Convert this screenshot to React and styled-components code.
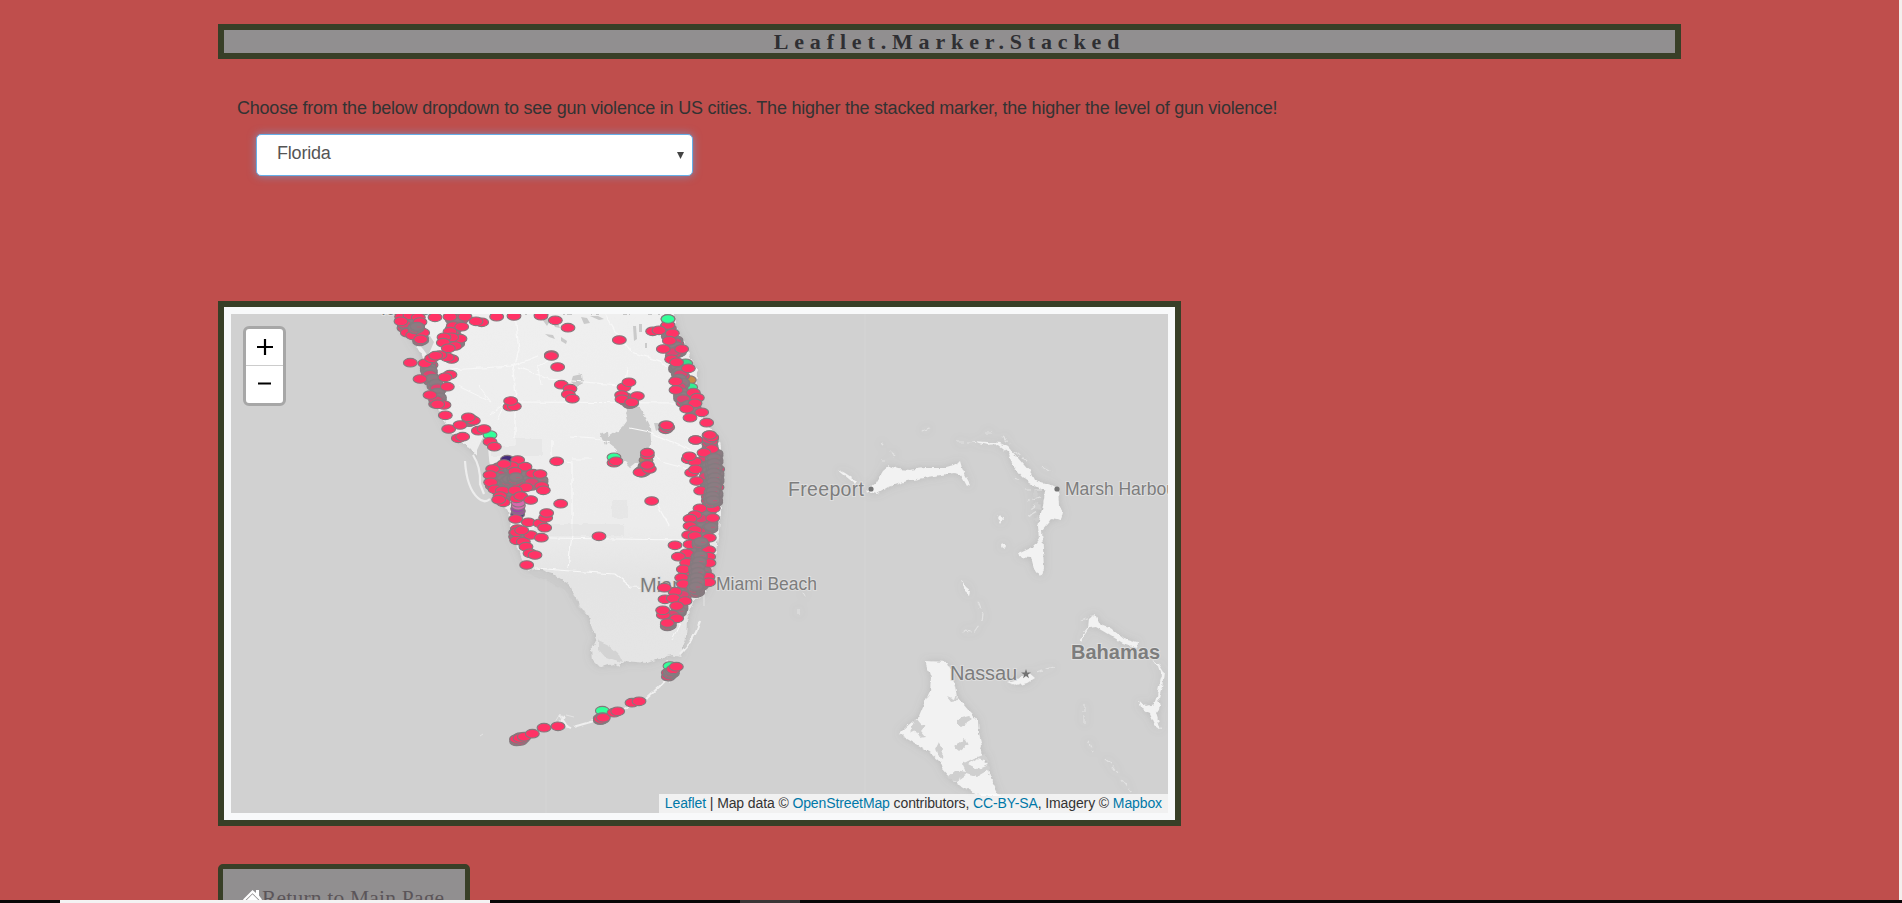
import React from "react";
import styled, { createGlobalStyle } from "styled-components";

const GlobalStyle = createGlobalStyle`
  * { box-sizing: border-box; }
  html, body { margin: 0; padding: 0; }
  body {
    background: #bf4e4c;
    overflow: hidden;
    font-family: "Liberation Sans", Arial, sans-serif;
  }
`;

const Page = styled.div`
  position: relative;
  height: 903px;
  overflow: hidden;
  background: #bf4e4c;
  padding: 24px 0 0 218px;
`;

const Container = styled.main`
  width: 1463px;
  display: flex;
  flex-direction: column;
  align-items: flex-start;
`;

const Title = styled.h1`
  width: 100%;
  height: 35px;
  margin: 0;
  border: 6px solid #383f27;
  background: #918f90;
  color: #2f2f33;
  font: bold 22px/23px "Liberation Serif", Georgia, serif;
  letter-spacing: 5.85px;
  text-align: center;
`;

const Prompt = styled.p`
  margin: 35px 0 0 19px;
  height: 28px;
  font-size: 18px;
  line-height: 28px;
  letter-spacing: -0.225px;
  color: #333;
  white-space: nowrap;
`;

const SelectBox = styled.div`
  display: flex;
  align-items: center;
  justify-content: space-between;
  width: 437px;
  height: 42px;
  margin: 12px 0 0 38px;
  padding: 0 8px 3px 20px;
  border: 1px solid #66afe9;
  border-radius: 5px;
  background: #fff;
  box-shadow: 0 0 9px rgba(102, 175, 233, 0.65);
  color: #555;
  font-size: 18px;
  letter-spacing: -0.2px;
`;

const Arrow = styled.svg`
  width: 7px;
  height: 7px;
  margin-top: 3px;
`;

const MapFrame = styled.section`
  position: relative;
  width: 963px;
  height: 525px;
  margin-top: 125px;
  padding: 7px;
  border: 6px solid #383f27;
  background: #f8f9fa;
`;

const MapCanvas = styled.svg`
  display: block;
  width: 937px;
  height: 499px;
`;

const ZoomControl = styled.div`
  position: absolute;
  left: 19px;
  top: 19px;
  width: 43px;
  height: 80px;
  border: 3px solid #a7a7a7;
  border-radius: 6px;
  background: #fff;
  overflow: hidden;
`;

const ZoomButton = styled.div`
  display: flex;
  align-items: center;
  justify-content: center;
  height: 37px;
  padding-bottom: ${(p) => (p.$divided ? "0" : "2px")};
  border-bottom: ${(p) => (p.$divided ? "1px solid #ccc" : "none")};
`;

const Attribution = styled.div`
  position: absolute;
  right: 7px;
  bottom: 7px;
  height: 19px;
  padding: 0 6px;
  background: rgba(255, 255, 255, 0.7);
  color: #333;
  font-size: 14px;
  line-height: 18px;
  letter-spacing: -0.11px;
  white-space: nowrap;
`;

const Credit = styled.span`
  color: #0078a8;
`;

const ReturnButton = styled.div`
  display: flex;
  align-items: flex-start;
  width: 252px;
  height: 70px;
  margin-top: 38px;
  padding: 17px 0 0 20px;
  border: 5px solid #383f27;
  border-radius: 5px;
  background: #918f90;
  color: #5b5559;
  font: 21.5px/25px "Liberation Serif", Georgia, serif;
  letter-spacing: 0.2px;
  white-space: nowrap;
`;

const HomeIcon = styled.svg`
  width: 19px;
  height: 17px;
  margin-top: 4px;
  flex: none;
`;

const Taskbar = styled.div`
  position: absolute;
  left: 0;
  bottom: 0;
  width: 1902px;
  height: 3px;
  display: flex;
`;

const TaskSegment = styled.div`
  width: ${(p) => p.$w}px;
  background: ${(p) => p.$color};
`;

const ScrollEdge = styled.div`
  position: absolute;
  right: 0;
  top: 0;
  width: 3px;
  height: 900px;
  background: #f4efed;
`;

/* Marker positions are in thirds of a pixel, measured from each area's origin. */
const areas = [
  {
    origin: [370, 300],
    dense: [[100, 56], [120, 55], [130, 65], [105, 78], [140, 82], [135, 90], [145, 105], [152, 120], [250, 55], [270, 60], [255, 70], [250, 88], [250, 105], [260, 130], [230, 120], [180, 195], [175, 207], [178, 217], [182, 230], [185, 240], [195, 255], [205, 270], [200, 282], [205, 296], [200, 306], [300, 362]],
    pts: [[95, 50], [120, 46], [145, 52], [93, 64], [150, 66], [112, 98], [128, 106], [158, 98], [152, 118], [195, 52], [240, 50], [285, 50], [250, 78], [275, 80], [335, 67], [318, 64], [380, 50], [432, 48], [513, 47], [556, 61], [594, 83], [240, 95], [270, 116], [245, 112], [222, 112], [220, 128], [255, 138], [235, 145], [245, 177], [232, 172], [210, 165], [165, 190], [185, 175], [197, 167], [121, 188], [150, 237], [240, 224], [225, 232], [232, 260], [180, 285], [222, 315], [203, 313], [226, 346], [236, 387], [270, 375], [310, 362], [295, 352], [265, 415], [278, 410], [325, 392], [342, 387], [360, 425], [373, 440], [544, 165], [563, 201], [574, 254], [600, 266], [595, 283], [607, 296], [420, 320], [433, 319], [422, 303], [544, 168]],
    special: [[360, 405, "#33ff99"]],
  },
  {
    origin: [560, 300],
    special: [[324, 57, "#33ff99"], [377, 190, "#35dd8b"], [388, 240, "#c98a45"], [392, 262, "#33ef93"], [162, 472, "#33ff99"], [258, 481, "#a88060"]],
    dense: [[325, 85], [328, 105], [345, 125], [348, 132], [345, 143], [355, 155], [340, 162], [350, 205], [358, 218], [365, 228], [355, 240], [365, 252], [360, 266], [365, 282], [365, 292], [372, 303], [385, 318], [400, 330], [200, 298], [212, 308], [450, 422], [450, 438], [248, 514], [258, 500], [320, 382]],
    pts: [[324, 75], [278, 94], [297, 91], [337, 100], [328, 122], [310, 147], [365, 147], [335, 178], [350, 187], [385, 205], [347, 244], [348, 270], [400, 278], [412, 293], [405, 310], [380, 326], [425, 337], [390, 353], [440, 368], [455, 414], [447, 406], [407, 420], [450, 446], [178, 120], [192, 262], [207, 247], [185, 285], [186, 298], [232, 288], [215, 307], [320, 376], [162, 488], [168, 484], [262, 466], [262, 458], [240, 517], [268, 507], [262, 495]],
  },
  {
    origin: [400, 400],
    special: [[322, 179, "#442a7b"], [353, 343, "#514088"], [355, 333, "#a846a8"], [353, 326, "#9f46a6"], [355, 317, "#db68af"], [355, 308, "#d768ad"]],
    dense: [[300, 207], [335, 210], [370, 211], [300, 230], [340, 226], [375, 230], [405, 233], [280, 235], [310, 239], [345, 238], [385, 243], [420, 244], [280, 252], [315, 252], [352, 250], [398, 252], [300, 270], [330, 267], [360, 262], [310, 285], [330, 281], [350, 404], [355, 413]],
    pts: [[353, 180], [335, 198], [312, 192], [375, 200], [278, 207], [398, 221], [420, 222], [270, 225], [345, 215], [272, 247], [425, 258], [430, 271], [285, 268], [307, 272], [378, 262], [345, 271], [300, 288], [310, 307], [296, 299], [350, 295], [362, 288], [392, 300], [385, 367], [347, 357], [420, 370], [434, 383], [437, 353], [440, 339], [482, 311], [470, 184], [352, 387], [350, 421], [370, 425], [392, 405], [350, 397], [365, 391], [424, 413], [378, 440], [390, 460], [405, 465], [380, 495], [597, 409]],
  },
  {
    origin: [580, 400],
    pts: [[395, 112], [389, 105], [347, 120], [395, 147], [372, 158], [325, 178], [345, 185], [328, 169], [335, 218], [347, 208], [350, 243], [362, 272], [360, 325], [345, 345], [330, 356], [330, 378], [345, 390], [326, 405], [345, 408], [330, 433], [285, 436], [320, 460], [295, 470], [320, 488], [310, 508], [305, 533], [310, 552], [285, 575], [253, 563], [255, 598], [280, 595], [315, 603], [290, 618], [250, 645], [248, 631], [290, 655], [262, 669], [215, 303], [386, 450], [386, 470], [387, 489], [384, 530], [386, 547], [388, 413], [398, 354], [400, 325]],
    dense: [[390, 125], [385, 160], [405, 165], [380, 180], [405, 185], [385, 200], [410, 208], [385, 215], [408, 225], [382, 235], [408, 243], [385, 252], [408, 262], [388, 273], [405, 285], [388, 296], [404, 305], [390, 318], [385, 335], [378, 350], [390, 370], [365, 362], [365, 385], [390, 385], [360, 400], [372, 415], [350, 422], [365, 435], [345, 450], [372, 455], [335, 475], [365, 480], [330, 495], [365, 500], [340, 510], [370, 515], [330, 525], [362, 530], [340, 540], [373, 545], [325, 555], [360, 557], [335, 570], [350, 575], [295, 580], [310, 590], [300, 625], [295, 637], [280, 650], [265, 675]],
    late: [[400, 178], [400, 193], [402, 208], [398, 222], [402, 236], [398, 250], [400, 264], [396, 278], [394, 292], [396, 305], [360, 430], [358, 470], [355, 488], [350, 505], [352, 520], [348, 536], [350, 550], [345, 564]],
    special: [],
  },
  {
    origin: [480, 560],
    special: [[570, 318, "#33ff99"], [367, 452, "#33ff99"]],
    dense: [[568, 344], [574, 338], [113, 540], [124, 537], [364, 476]],
    pts: [[580, 328], [589, 320], [456, 428], [477, 424], [362, 477], [370, 473], [402, 458], [413, 454], [234, 499], [192, 503], [110, 537], [120, 534], [133, 530], [157, 521]],
  },
];

function Marker({ origin, point, fill }) {
  return (
    <ellipse
      cx={origin[0] + point[0] / 3}
      cy={origin[1] + point[1] / 3}
      rx="6.9"
      ry="4.3"
      fill={fill}
      stroke="#85787c"
      strokeWidth="1.1"
    />
  );
}

/* Several markers piled almost on one spot: mostly outlines, with slivers of fill. */
function MarkerPile({ origin, point, loose }) {
  const cx = origin[0] + point[0] / 3;
  const cy = origin[1] + point[1] / 3;
  const steps = loose ? [2, 0, -2] : [1.5, 0.5, -0.5, -1.5];
  return (
    <g fill={loose ? "#e04470" : "#8b7c82"} stroke="#847b7f" strokeWidth="1.2">
      {steps.map((d, i) => (
        <ellipse key={d} cx={cx + (i % 2 ? 1 : -1)} cy={cy + d} rx="6.9" ry="4.2" />
      ))}
      {!loose && <path d={`M${cx - 6} ${cy + 2.5}q3 2.5 7 1.8M${cx + 1} ${cy - 1}h4`} fill="none" stroke="#c95576" strokeWidth=".8" />}
    </g>
  );
}

function FloridaLand() {
  return (
    <g>
      <path
        filter="url(#shore)"
        fill="url(#land)"
        d="M397 314L413 340 424 358 421 370 431 392 439 411 446 425 456 438 470 448 480 459 488 456 491 475 497 493 508 511 512 532 519 551 525 566 528 571 535 568 552 573 570 585 576 599 580 607 589 616 592 628 597 639 591 650 592 659 600 667 614 664 619 667 625 661 647 663 664 657 672 655 680 657 683 647 686 637 687 620 693 602 707 590 714 565 719 530 722 495 723 460 719 442 708 426 701 410 697 394 698 373 687 349 677 331 673 314Z"
      />
      <path fill="#cdcdcd" d="M412 337L430 336 434 342 428 356 423 349ZM484 435L488 447 490 470 484 481 477 463 477 450ZM675 385L684 395 688 412 681 404Z" />
      <path d="M465 461C466 477 469 490 478 498Q484 504 490 499M473 455Q481 467 480 484L484 494" fill="none" stroke="#ededed" strokeWidth="2.2" />
      <path filter="url(#rough)" fill="#c9c9c9" d="M625 412L628 406 640 408 646 417 651 428 652 440 648 450 642 455 640 466 635 463 630 467 623 460 616 449 608 443 609 437 622 428 627 421ZM600 433L608 432 609 440 605 445ZM573 376L582 374 583 383 578 388 571 382Z" />
      <g filter="url(#rough)" fill="none" stroke="#f8f8f8" strokeWidth="1.2">
        <path d="M515 315L519 350 513 372 516 393 511 409M450 370L512 366 538 356M518 367L549 379 630 386M511 402L680 403M515 403V438M552 440V460L572 463 572 535 568 568M605 314L616 333 631 352 660 361 675 374M535 538L549 538 684 540M535 568L570 571 615 574 631 587 666 588M630 428L650 432 700 455M655 500L669 525M570 436L594 438 610 442M592 459H572M628 367L625 390" />
        <path d="M541 385L538 366 552 359M458 386L491 402 479 386M490 415L505 403 497 420M645 449L665 463 700 472M672 640L681 621M666 660L670 682" strokeWidth=".9" />
      </g>
      <g fill="#cacaca">
        <path d="M542 319l5-2 3 4-3 5zM552 321l6 2 2 5-5-1zM545 334l8 1 2 4-6-2zM561 337l6 4-1 3-5-3zM581 317l6 1 3 5-6 1zM590 316l8 0 6 3-5 1zM633 326l3 0 1 13-3 2zM639 324h3v8h-3zM645 343h2v5h-2zM654 423h4l2 5-4 3z" />
        <path filter="url(#rough)" d="M534 571l18 4 15 9 18 29-4 1-16-24-19-10-18-6zM598 640l11 5 9 8 5 10-8-2-9-3-8-9z" opacity=".65" />
      </g>
      <path fill="#e2e2e2" opacity=".5" filter="url(#rough)" d="M490 446h26v-8h26v18h-52zM534 524h90v12h-90zM612 500h16v18h-16z" />
      <path d="M700 621Q694 640 680 654M668 678L659 687 646 699M631 705L618 713M594 721L573 727M559 714L568 728 570 729M560 724L564 716" fill="none" stroke="#efefef" strokeWidth="2.2" filter="url(#rough)" />
      <path d="M555 722l5-8 2 5M566 715l8 2M480 736l3-2M704 593v13" fill="none" stroke="#e4e4e4" />
    </g>
  );
}

function BahamasLand() {
  return (
    <g fill="#f2f2f2" filter="url(#shore)">
      <path d="M866 491L876 483 883 471 889 466 898 469 910 470 925 468 943 468 957 464 960 461 962 468 965 475 970 484 967 486 961 475 955 473 934 476 907 481 889 487 877 494Z" />
      <path d="M837 469L845 473 857 481 855 484Z" />
      <path d="M971 441L987 442 1000 443 1008 447 1017 457 1031 473 1035 481 1051 486 1058 490 1059 506 1063 512 1061 520 1052 518 1042 530 1043 549 1044 570 1040 576 1034 568 1031 557 1019 556 1018 554 1033 547 1039 538 1038 526 1043 506 1045 491 1032 484 1022 477 1013 466 1008 452 998 444 987 445Z" />
      <path d="M997 517l4-2 3 4-3 5zM1003 543l3 3-1 2-3-2zM961 579l5 8 5 4-1 4-5-4zM936 664l3-1-1 5z" />
      <path d="M925 661L947 662 951 670 955 686 957 697 969 711 978 721 979 734 982 746 980 752 986 763 991 779 1000 796H982L963 787 950 778 942 769 939 761 930 753 919 746 899 734 904 729 919 716 924 704 930 691 931 678Z" />
      <path d="M1007 682l10-3 11-7 7 6-8 5-10 3z" />
      <path d="M1078 641l10-13 1-9 6-5 4 9 10 4 15 12 14 4-1 5-14-5-15-9-12-7-7 1-9 14zM1151 661l8 3 5 8-2 15-3 11 2 8-5 7 5 17-6-5-5-11-10-7-2-6 9 5 7-2 3-8 2-10 3-11-3-9z" />
      <path d="M957 442h14M923 432l8-4M881 443l2 2M890 452l5 4M984 433h8M1002 436l8 8M1014 451l13 10M1042 467l10 5M881 461l4 0M1081 620l14-5M1036 672l18-5M1084 704v20M1088 740l5 12M1105 759l5 4 8 10M1122 780l9 12M978 602l5 12-1 7M979 625l-5 7-13-1M799 609v5M802 593l4 3M1020 480l-6-2M1042 490h-18M1040 497l-12 4M1038 504l-9 6M1036 512l-7 4" fill="none" stroke="#e2e2e2" strokeWidth="1.2" strokeDasharray="8 3" />
      <g fill="#cfcfcf">
        <path d="M1033 489l5 4-1 4-4-2zM1035 503l6 2-1 4-5-2zM1034 519l4-3 1 5zM947 697l7 3 2-6 1 7-6 1zM957 719l12-3 4 3-12 7-4-2zM954 747l11-8 3 5-9 7zM915 718l6 7 4 1-4 5 5 6-6 1-5-8-6 3zM936 748l3-6 4 5-1 11-4-3zM947 778l9-8 10 2-4-8 12-6 11-4 4 8-13-3-8 5 10 5 10-4 2 4-14 8-10-3-10 7z" />
      </g>
    </g>
  );
}

function ViolenceMap() {
  return (
    <MapCanvas viewBox="231 314 937 499">
      <defs>
        <linearGradient id="land" x1="0" y1="0" x2="0" y2="1">
          <stop offset="0" stopColor="#efefef" />
          <stop offset=".6" stopColor="#ececec" />
          <stop offset=".75" stopColor="#e4e4e4" />
          <stop offset="1" stopColor="#e5e5e5" />
        </linearGradient>
        <filter id="rough" x="-10%" y="-10%" width="120%" height="120%">
          <feTurbulence type="fractalNoise" baseFrequency=".12" numOctaves="2" seed="7" result="n" />
          <feDisplacementMap in="SourceGraphic" in2="n" scale="4" xChannelSelector="R" yChannelSelector="G" />
        </filter>
        <filter id="shore" x="-10%" y="-10%" width="120%" height="120%">
          <feTurbulence type="fractalNoise" baseFrequency=".18" numOctaves="2" seed="4" result="n" />
          <feDisplacementMap in="SourceGraphic" in2="n" scale="5" xChannelSelector="R" yChannelSelector="G" result="coast" />
          <feDropShadow in="coast" dx="0" dy="0" stdDeviation="4" floodColor="#777" floodOpacity=".25" />
        </filter>
      </defs>
      <rect x="231" y="314" width="937" height="499" fill="#d1d1d1" />
      <path d="M546 314V813M865 314V813" stroke="#d5d5d5" />
      <FloridaLand />
      <BahamasLand />
      <g fill="#7d7d7d" fontFamily="Liberation Sans, Arial, sans-serif" fontSize="17.5" stroke="#dedede" strokeWidth="2" paintOrder="stroke">
        <text x="788" y="495.5" textLength="76" fontSize="19.5">Freeport</text>
        <text x="1065" y="495" fontSize="17.5">Marsh Harbour</text>
        <text x="716" y="590" textLength="101">Miami Beach</text>
        <text x="640" y="591.5" fontSize="20">Miami</text>
        <text x="950" y="680" textLength="67" fontSize="20">Nassau</text>
        <text x="1071" y="659" textLength="89" fontSize="20" fontWeight="bold">Bahamas</text>
        <text x="378" y="315" fontSize="18">Tampa</text>
      </g>
      <g fill="#737373">
        <circle cx="871" cy="489" r="2.6" />
        <circle cx="1057" cy="489" r="2.6" />
        <path d="M1026 669l1.2 3.5h3.7l-3 2.2 1.1 3.6-3-2.2-3 2.2 1.1-3.6-3-2.2h3.7z" />
      </g>
      {areas.map((area) => (
        <g key={area.origin.join()}>
          {area.special.map((p, i) => <Marker key={i} origin={area.origin} point={p} fill={p[2]} />)}
          {area.dense.map((p, i) => <MarkerPile key={i} origin={area.origin} point={p} loose={i % 3 === 0} />)}
          {area.pts.map((p, i) => <Marker key={i} origin={area.origin} point={p} fill="#ff3366" />)}
          {(area.late || []).map((p, i) => <MarkerPile key={i} origin={area.origin} point={p} />)}
        </g>
      ))}
      <MarkerPile origin={[400, 400]} point={[325, 242]} />
      <MarkerPile origin={[400, 400]} point={[345, 236]} />
      <MarkerPile origin={[370, 300]} point={[138, 84]} />
      <Marker origin={[560, 300]} point={[324, 57]} fill="#33ff99" />
    </MapCanvas>
  );
}

export default function App() {
  return (
    <>
      <GlobalStyle />
      <Page>
        <Container>
          <Title>Leaflet.Marker.Stacked</Title>
          <Prompt>
            Choose from the below dropdown to see gun violence in US cities. The higher the stacked marker, the higher the level of gun violence!
          </Prompt>
          <SelectBox>
            <span>Florida</span>
            <Arrow viewBox="0 0 7 7"><path d="M0 0h7L3.5 7z" fill="#444" /></Arrow>
          </SelectBox>
          <MapFrame>
            <ViolenceMap />
            <ZoomControl>
              <ZoomButton $divided>
                <svg width="16" height="16" viewBox="0 0 16 16"><path d="M0 8H16M8 0V16" stroke="#000" strokeWidth="2.2" /></svg>
              </ZoomButton>
              <ZoomButton>
                <svg width="13" height="3" viewBox="0 0 13 3"><path d="M0 1.5H13" stroke="#000" strokeWidth="2.2" /></svg>
              </ZoomButton>
            </ZoomControl>
            <Attribution>
              <Credit>Leaflet</Credit> | Map data © <Credit>OpenStreetMap</Credit> contributors, <Credit>CC-BY-SA</Credit>, Imagery © <Credit>Mapbox</Credit>
            </Attribution>
          </MapFrame>
          <ReturnButton>
            <HomeIcon viewBox="0 0 19 17">
              <path d="M9.5 0L13 3V0H16V5.5L19 9.5 17.5 11 9.5 3.2 1.5 11 0 9.5ZM3 10.8L9.5 4.3 16 10.8V17H11V12H8V17H3Z" fill="#fff" />
            </HomeIcon>
            <span>Return to Main Page</span>
          </ReturnButton>
        </Container>
        <ScrollEdge />
        <Taskbar>
          <TaskSegment $w={60} $color="#090606" />
          <TaskSegment $w={430} $color="#f4f3f3" />
          <TaskSegment $w={250} $color="#090606" />
          <TaskSegment $w={60} $color="#3b3636" />
          <TaskSegment $w={1102} $color="#090606" />
        </Taskbar>
      </Page>
    </>
  );
}
